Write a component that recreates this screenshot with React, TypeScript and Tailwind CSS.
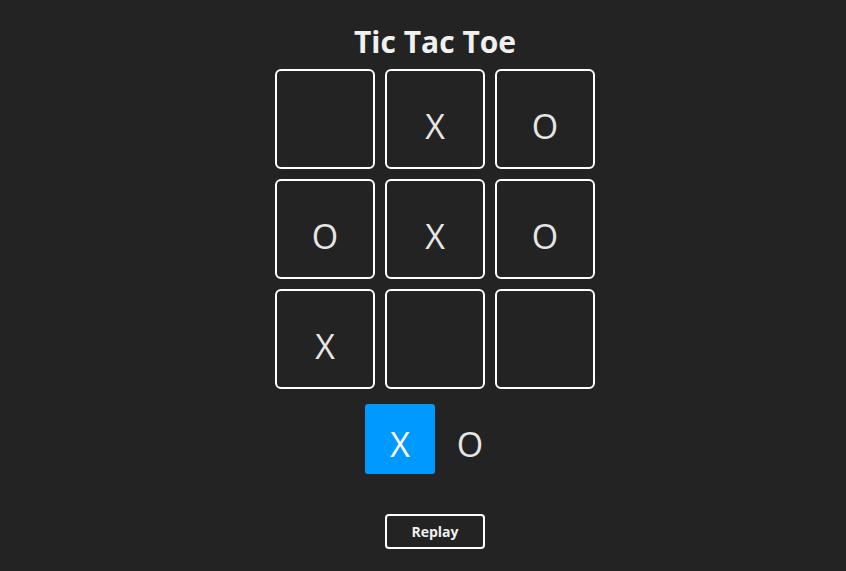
import React from "react";

const board = ["", "X", "O", "O", "X", "O", "X", "", ""];

export default function App() {
  return (
    <div
      className="min-h-[571px] w-full bg-[#232323] pl-[24px] flex flex-col items-center"
      style={{ fontFamily: '"Open Sans", "Noto Sans", sans-serif' }}
    >
      <h1 className="mt-[22px] h-[40px] text-[30px] leading-[40px] font-bold text-[#f0f0f0]">Tic Tac Toe</h1>
      <div className="mt-[7px] grid grid-cols-[100px_100px_100px] gap-[10px]">
        {board.map((v, i) => (
          <div
            key={i}
            className="w-[100px] h-[100px] border-2 border-white rounded-[6px] flex items-center justify-center pt-[14px] text-[34px] text-[#e6e6e6]"
          >
            {v}
          </div>
        ))}
      </div>
      <div className="mt-[15px] flex">
        <div className="w-[70px] h-[70px] bg-[#0099ff] rounded-[3px] flex items-center justify-center pt-[10px] text-[34px] text-white">
          X
        </div>
        <div className="w-[70px] h-[70px] flex items-center justify-center pt-[10px] text-[34px] text-[#e6e6e6]">
          O
        </div>
      </div>
      <button className="mt-[40px] w-[100px] h-[35px] border-2 border-white rounded-[4px] text-[14px] font-bold text-[#f0f0f0] bg-transparent">
        Replay
      </button>
    </div>
  );
}
